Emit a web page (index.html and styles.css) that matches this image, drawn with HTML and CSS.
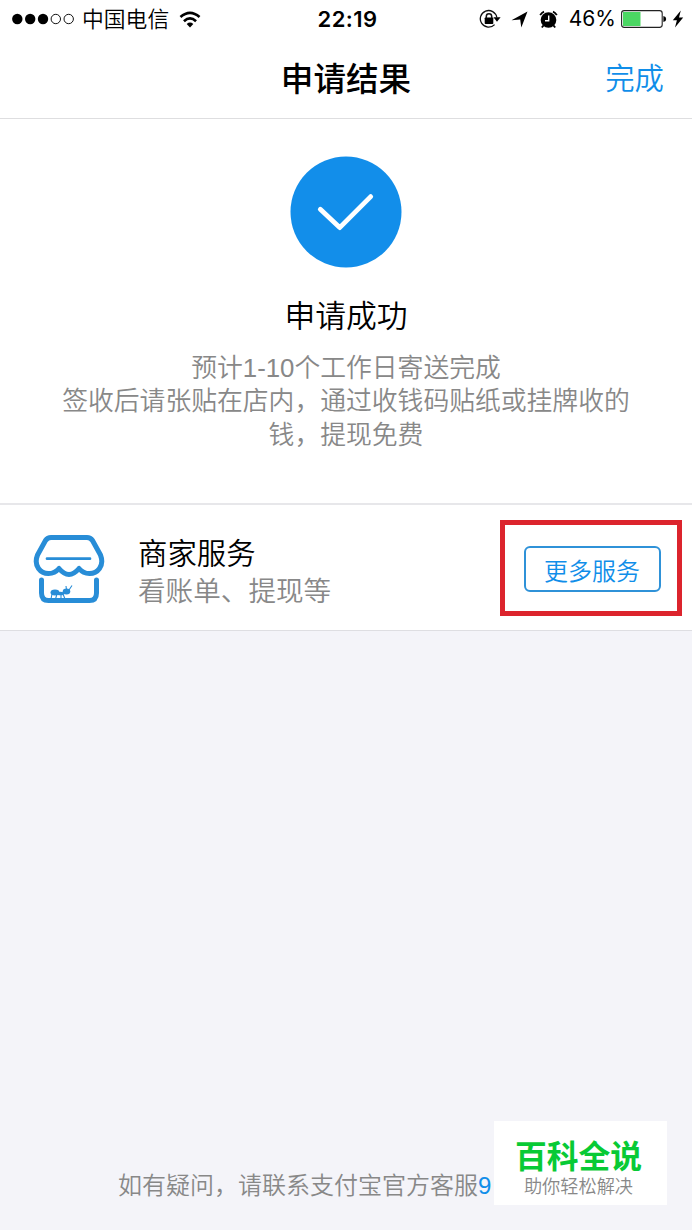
FILE: index.html
```html
<!DOCTYPE html>
<html lang="zh-CN">
<head>
<meta charset="utf-8">
<title>申请结果</title>
<link rel="stylesheet" href="styles.css">
</head>
<body>
<div class="screen">
  <header class="top">
    <div class="status">
      <div class="status-left">
        <svg class="signal" width="64" height="14" viewBox="0 0 64 14">
          <circle cx="6.3" cy="7" r="5.2"/><circle cx="19.2" cy="7" r="5.2"/><circle cx="32" cy="7" r="5.2"/>
          <g fill="none" stroke="#111" stroke-width="1"><circle cx="44.8" cy="7" r="4.7"/><circle cx="57.7" cy="7" r="4.7"/></g>
        </svg>
        <span class="carrier">中国电信</span>
        <svg class="wifi" width="22" height="17" viewBox="0 0 24 18">
          <g fill="none" stroke="#000" stroke-width="2.9"><path d="M1.6 6.4Q12 -2.6 22.4 6.4"/><path d="M5.4 10.8Q12 4.8 18.6 10.8"/></g>
          <path d="M8.400 14Q12 10.800 15.600 14L12 17.700Z"/>
        </svg>
      </div>
      <span class="clock">22:19</span>
      <div class="status-right">
        <svg class="lock" width="22" height="20" viewBox="0 0 22 20">
          <path d="M15.600 15.600A8.300 8.300 0 1 1 17.800 8.500" fill="none" stroke="#111" stroke-width="1.300"/>
          <path d="M14.400 8.300h7.200l-3.600 4.500z"/>
          <rect x="5.700" y="8.600" width="8.600" height="6.300" rx=".7"/>
          <path d="M7.300 9V7.500a2.700 2.700 0 0 1 5.400 0V9" fill="none" stroke="#111" stroke-width="1.500"/>
        </svg>
        <svg class="arrow" width="17" height="17" viewBox="0 0 17 17"><path d="M16.500.5L10.300 16.500 9.200 8.600.5 9.200Z"/></svg>
        <svg class="alarm" width="19" height="19" viewBox="0 0 19 19">
          <circle cx="9.500" cy="10" r="7.800"/>
          <path d="M1.200 5.200A8 8 0 0 1 5 1.600M17.800 5.200A8 8 0 0 0 14 1.600M4.400 15.600l-1.600 1.900M14.600 15.600l1.600 1.900" fill="none" stroke="#000" stroke-width="1.800"/>
          <path d="M9.700 5.600v5.200H6" fill="none" stroke="#fff" stroke-width="1.400"/>
        </svg>
        <span class="percent">46%</span>
        <svg class="battery" width="46" height="18" viewBox="0 0 46 18">
          <rect x=".6" y=".6" width="40.600" height="16.800" rx="2.600" fill="#fff" stroke="#222" stroke-width="1.100"/>
          <rect x="2" y="2" width="17.500" height="14" fill="#4bd763"/>
          <path d="M42.400 6q2.800.6 2.800 3t-2.800 3z"/>
        </svg>
        <svg class="bolt" width="12" height="18" viewBox="0 0 12 18"><path d="M8.800.5L.8 10.200h4.100L3 17.400 11.200 7.500H7z"/></svg>
      </div>
    </div>
    <div class="nav">
      <h1 class="nav-title">申请结果</h1>
      <a class="nav-done">完成</a>
    </div>
  </header>

  <main>
    <section class="result">
      <svg class="check" width="112" height="112" viewBox="0 0 112 112">
        <circle cx="56" cy="56" r="55.500" fill="#128eea"/>
        <path d="M30.300 53.300L49.700 71.600 80.700 40.600" fill="none" stroke="#fff" stroke-width="4.800" stroke-linecap="round" stroke-linejoin="round"/>
      </svg>
      <h2 class="result-title">申请成功</h2>
      <p class="result-text">预计1-10个工作日寄送完成<br>签收后请张贴在店内，通过收钱码贴纸或挂牌收的<br>钱，提现免费</p>
    </section>

    <section class="service">
      <svg class="shop" width="72" height="70" viewBox="0 0 72 70">
        <g fill="none" stroke="#288dd7" stroke-width="5" stroke-linecap="round" stroke-linejoin="round">
          <path d="M18 3.500H54Q57.500 3.500 59.500 6.500L67.500 21Q70.500 29 66.500 34.500C61.500 41.500 51.500 41 46 34.500Q41 40.500 36 40.500T26 34.500C20.500 41 10.500 41.500 5.500 34.500Q1.500 29 4.500 21L12.500 6.500Q14.500 3.500 18 3.500Z"/>
          <path d="M8.500 46V59Q8.500 66.500 15.500 66.500H56.500Q63.500 66.500 63.500 59V46"/>
          <path d="M14 24.700H57" stroke-width="2.700"/>
        </g>
        <g fill="#288dd7">
          <ellipse cx="22" cy="58.500" rx="4.500" ry="3"/><ellipse cx="27.500" cy="59.500" rx="4" ry="1.800"/><ellipse cx="33.500" cy="57.500" rx="3.800" ry="3"/>
          <path d="M19 60L18 65M24 60L22.500 65M28 60V65M30 60L32 65M33.500 56L33 52M36 56L39 51.500" fill="none" stroke="#288dd7" stroke-width="1.100"/>
        </g>
      </svg>
      <div class="service-info">
        <div class="service-name">商家服务</div>
        <div class="service-desc">看账单、提现等</div>
      </div>
      <div class="highlight"><a class="more">更多服务</a></div>
    </section>
  </main>

  <footer class="help">如有疑问，请联系支付宝官方客服<span class="phone">9</span></footer>

  <aside class="watermark">
    <div class="brand">百科全说</div>
    <div class="slogan">助你轻松解决</div>
  </aside>
</div>
</body>
</html>
```
FILE: styles.css
```css
* { box-sizing: border-box; }
body {
  margin: 0;
  font-family: "Liberation Sans", "Noto Sans CJK SC", sans-serif;
  font-weight: 350;
  color: #000;
}
h1, h2, p { margin: 0; }
svg { display: block; flex: none; }
.screen {
  position: relative;
  display: flex;
  flex-direction: column;
  width: 692px;
  height: 1230px;
  overflow: hidden;
  background: #f4f4f9;
}
.top {
  height: 119px;
  background: #fff;
  border-bottom: 1px solid #dedee0;
}
.status {
  display: grid;
  grid-template-columns: 1fr auto 1fr;
  align-items: center;
  height: 38px;
  padding: 0 8px 0 11px;
}
.status-left, .status-right { display: flex; align-items: center; }
.status-right { justify-content: flex-end; }
.carrier {
  margin-left: 7px;
  padding-top: 2px;
  font-size: 21.8px;
  line-height: 36px;
}
.wifi { margin-left: 10px; }
.clock { font: 600 22px/38px Inter, sans-serif; letter-spacing: .4px; }
.arrow { margin-left: 10px; }
.alarm { margin-left: 11px; }
.percent { margin-left: 11px; font: 400 21px/38px Inter, sans-serif; }
.battery { margin-left: 5px; }
.bolt { margin-left: 5px; }
.nav {
  display: grid;
  grid-template-columns: 1fr auto 1fr;
  align-items: center;
  height: 80px;
  padding: 0 28px;
}
.nav-title {
  grid-column: 2;
  padding-top: 3px;
  font-size: 32.6px;
  line-height: 77px;
  font-weight: 500;
}
.nav-done {
  justify-self: end;
  padding-bottom: 4px;
  font-size: 29.4px;
  color: #108ee9;
}
.result {
  display: flex;
  flex-direction: column;
  align-items: center;
  height: 386px;
  padding-top: 37px;
  background: #fff;
  border-bottom: 2px solid #e7e7ea;
}
.result-title {
  margin-top: 26px;
  font-size: 30.8px;
  line-height: 46px;
  font-weight: 350;
}
.result-text {
  margin-top: 12px;
  font-size: 25.8px;
  line-height: 33.4px;
  color: #888;
  text-align: center;
  white-space: nowrap;
}
.service {
  display: flex;
  align-items: center;
  height: 126px;
  padding: 0 10px 0 33px;
  background: #fff;
  border-bottom: 1px solid #dedee2;
}
.shop { margin-top: 3px; }
.service-info { flex: 1; margin-left: 33px; padding-top: 10px; }
.service-name { font-size: 29.4px; line-height: 38px; }
.service-desc { font-size: 27.6px; line-height: 37px; color: #888; }
.highlight {
  display: flex;
  align-items: center;
  justify-content: center;
  width: 182px;
  height: 96px;
  padding: 2px 0 0 2px;
  border: 5px solid #dc242d;
}
.more {
  width: 137px;
  height: 46px;
  padding-top: 1px;
  border: 2px solid #2f92d8;
  border-radius: 6px;
  font-size: 24px;
  line-height: 45px;
  text-align: center;
  color: #108ee9;
}
.help {
  margin-top: auto;
  padding: 0 0 24px 118px;
  font-size: 24px;
  line-height: 40px;
  color: #888;
  white-space: nowrap;
}
.phone { color: #108ee9; }
.watermark {
  position: absolute;
  left: 494px;
  top: 1121px;
  width: 173px;
  height: 84px;
  padding-top: 16px;
  background: #fff;
  text-align: center;
}
.brand {
  padding-right: 4px;
  font-size: 31.8px;
  line-height: 40px;
  font-weight: 700;
  color: #08ca35;
}
.slogan {
  padding-right: 4px;
  font-size: 18.2px;
  line-height: 20px;
  color: #888;
}
```
